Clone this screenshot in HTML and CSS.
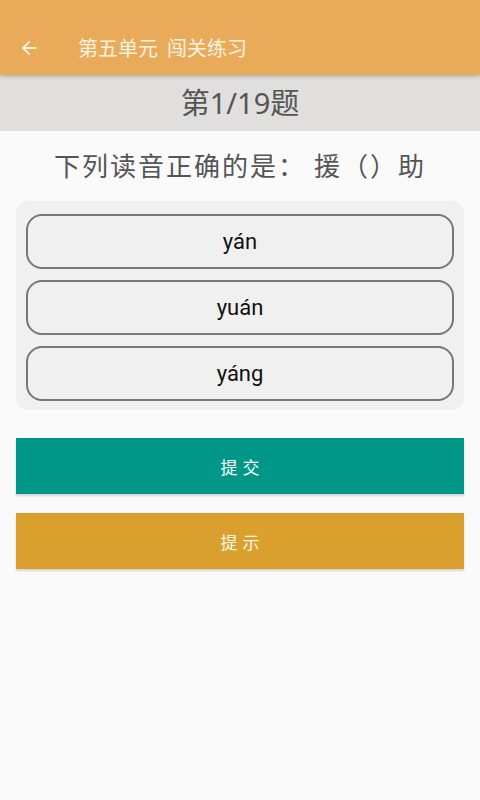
FILE: index.html
```html
<!DOCTYPE html>
<html lang="zh">
<head>
<meta charset="utf-8">
<link rel="stylesheet" href="styles.css">
</head>
<body>
<header class="appbar">
  <svg class="back" width="22" height="22" viewBox="0 0 24 24"><path d="M20 11H7.83l5.59-5.59L12 4l-8 8 8 8 1.41-1.41L7.83 13H20v-2z" fill="#fdf3e2"/></svg>
  <span class="title">第五单元&nbsp;&nbsp;闯关练习</span>
</header>
<div class="progress">第1/19题</div>
<div class="question">下列读音正确的是： 援（）助</div>
<div class="panel">
  <div class="option">yán</div>
  <div class="option">yuán</div>
  <div class="option">yáng</div>
</div>
<div class="btn submit">提交</div>
<div class="btn hint">提示</div>
</body>
</html>
```
FILE: styles.css
```css
html, body { margin: 0; padding: 0; }
body {
  width: 480px;
  height: 800px;
  background: #fafafa;
  font-family: "Noto Sans CJK SC", "Noto Sans", sans-serif;
  overflow: hidden;
}
.appbar {
  height: 75px;
  background: #e9aa5a;
  display: flex;
  align-items: center;
  padding: 20px 0 0 18px;
  box-sizing: border-box;
  box-shadow: 0 2px 3px rgba(0,0,0,0.18);
  position: relative;
  z-index: 1;
}
.back { flex: none; }
.title {
  color: #fdf3e2;
  font-size: 20px;
  line-height: 26px;
  margin-left: 38px;
}
.progress {
  height: 56px;
  background: #e0dfde;
  color: #555;
  font-family: "Noto Sans", "Noto Sans CJK SC", sans-serif;
  font-size: 29px;
  line-height: 56px;
  text-align: center;
}
.question {
  color: #555;
  font-size: 26px;
  text-align: center;
  line-height: 34px;
  margin-top: 17px;
  letter-spacing: 2px;
  text-spacing-trim: space-all;
}
.panel {
  margin: 19px 16px 0;
  background: #f0f0f0;
  border-radius: 12px;
  padding: 13px 10px 9px;
  display: flex;
  flex-direction: column;
  gap: 11px;
}
.option {
  height: 55px;
  border: 2px solid #777;
  border-radius: 16px;
  box-sizing: border-box;
  display: flex;
  align-items: center;
  justify-content: center;
  font-family: Roboto, sans-serif;
  font-size: 22px;
  color: #111;
}
.btn {
  margin: 0 16px;
  height: 56px;
  display: flex;
  align-items: center;
  justify-content: center;
  color: #fff;
  font-size: 17px;
  letter-spacing: 5px;
  text-indent: 5px;
  box-shadow: 0 2px 2px rgba(0,0,0,0.15);
}
.submit { background: #009688; margin-top: 28px; }
.hint { background: #d9a02d; margin-top: 19px; color: #fdf6e8; }
```
